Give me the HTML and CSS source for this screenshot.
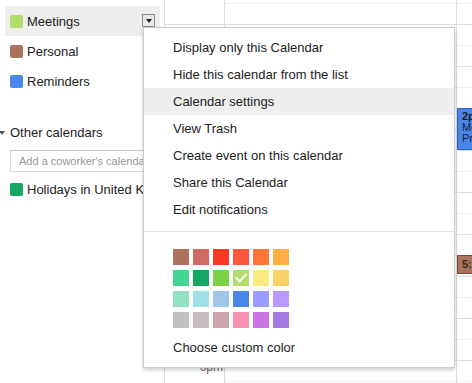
FILE: index.html
```html
<!DOCTYPE html>
<html lang="en">
<head>
<meta charset="utf-8">
<title>Calendar menu</title>
<link rel="stylesheet" href="styles.css">
</head>
<body>
<div class="app">
  <aside class="sidebar">
    <div class="cal-item is-active">
      <span class="swatch c-meetings"></span>
      <span class="cal-label">Meetings</span>
      <span class="drop"><span class="drop-arrow"></span></span>
    </div>
    <div class="cal-item">
      <span class="swatch c-personal"></span>
      <span class="cal-label">Personal</span>
    </div>
    <div class="cal-item">
      <span class="swatch c-reminders"></span>
      <span class="cal-label">Reminders</span>
    </div>
    <div class="section-head"><span class="caret"></span>Other calendars</div>
    <input class="add-input" type="text" placeholder="Add a coworker's calendar">
    <div class="cal-item">
      <span class="swatch c-holidays"></span>
      <span class="cal-label">Holidays in United Kingdom</span>
    </div>
  </aside>

  <div class="times">
    <div class="hour"></div>
    <div class="hour"><span class="time-label">11am</span></div>
    <div class="hour"><span class="time-label">12pm</span></div>
    <div class="hour"><span class="time-label">1pm</span></div>
    <div class="hour"><span class="time-label">2pm</span></div>
    <div class="hour"><span class="time-label">3pm</span></div>
    <div class="hour"><span class="time-label">4pm</span></div>
    <div class="hour"><span class="time-label">5pm</span></div>
    <div class="hour"><span class="time-label">6pm</span></div>
  </div>

  <div class="day">
    <div class="slot"></div><div class="slot"></div><div class="slot"></div><div class="slot"></div>
    <div class="slot"></div><div class="slot"></div><div class="slot"></div><div class="slot"></div>
    <div class="slot"></div><div class="slot"></div><div class="slot"></div><div class="slot"></div>
    <div class="slot"></div><div class="slot"></div><div class="slot"></div><div class="slot"></div>
    <div class="slot"></div><div class="slot"></div><div class="slot"></div>
  </div>

  <div class="day day-next">
    <div class="slot"></div><div class="slot"></div><div class="slot"></div><div class="slot"></div>
    <div class="slot"></div><div class="slot"></div><div class="slot"></div><div class="slot"></div>
    <div class="slot"></div><div class="slot"></div><div class="slot"></div><div class="slot"></div>
    <div class="slot"></div><div class="slot"></div><div class="slot"></div><div class="slot"></div>
    <div class="slot"></div><div class="slot"></div><div class="slot"></div>
    <div class="event event-blue">
      <div class="event-time">2p</div>
      <div class="event-title">Meeting</div>
      <div class="event-title">Project</div>
    </div>
    <div class="event event-brown">
      <div class="event-time">5:30</div>
    </div>
  </div>

  <div class="menu">
    <div class="menu-item">Display only this Calendar</div>
    <div class="menu-item">Hide this calendar from the list</div>
    <div class="menu-item is-hover">Calendar settings</div>
    <div class="menu-item">View Trash</div>
    <div class="menu-item">Create event on this calendar</div>
    <div class="menu-item">Share this Calendar</div>
    <div class="menu-item">Edit notifications</div>
    <div class="menu-sep"></div>
    <div class="palette">
      <span class="chip p1"></span><span class="chip p2"></span><span class="chip p3"></span><span class="chip p4"></span><span class="chip p5"></span><span class="chip p6"></span>
      <span class="chip p7"></span><span class="chip p8"></span><span class="chip p9"></span>
      <span class="chip p10 is-checked"><svg class="check" width="16" height="16" viewBox="0 0 16 16"><path d="M3.5 8.2 L6.6 11.2 L12.5 5" fill="none" stroke="#fff" stroke-width="2.2" stroke-linecap="square"/></svg></span>
      <span class="chip p11"></span><span class="chip p12"></span>
      <span class="chip p13"></span><span class="chip p14"></span><span class="chip p15"></span><span class="chip p16"></span><span class="chip p17"></span><span class="chip p18"></span>
      <span class="chip p19"></span><span class="chip p20"></span><span class="chip p21"></span><span class="chip p22"></span><span class="chip p23"></span><span class="chip p24"></span>
    </div>
    <div class="menu-item custom">Choose custom color</div>
  </div>
</div>
</body>
</html>
```

FILE: styles.css
```css
* { box-sizing: border-box; }

html, body {
  margin: 0;
  padding: 0;
  background: #fff;
}

body {
  font-family: "Liberation Sans", Arial, sans-serif;
  font-size: 13px;
  color: #222;
  overflow: hidden;
}

.app {
  position: relative;
  display: flex;
  width: 472px;
  height: 383px;
  overflow: hidden;
}

/* ---------- sidebar ---------- */
.sidebar {
  width: 164px;
  flex: none;
  padding-top: 6px;
  overflow: hidden;
  white-space: nowrap;
}

.cal-item {
  display: flex;
  align-items: center;
  gap: 4px;
  height: 30px;
  margin-left: 5px;
  width: 155px;
  padding-left: 5px;
  line-height: 15px;
}

.cal-item.is-active { background: #eee; }

.swatch {
  width: 13px;
  height: 13px;
  border-radius: 2px;
  flex: none;
}

.c-meetings { background: #b3dc6c; }
.c-personal { background: #ac725e; }
.c-reminders { background: #4986e7; }
.c-holidays { background: #16a765; }

.cal-label { color: #222; }

.drop {
  margin-left: auto;
  margin-right: 5px;
  align-self: flex-start;
  margin-top: 8px;
  width: 13px;
  height: 13px;
  border: 1px solid #8a8a8a;
  background: #e9e9e9;
  display: flex;
  align-items: center;
  justify-content: center;
}

.drop-arrow {
  width: 0;
  height: 0;
  border-left: 3.5px solid transparent;
  border-right: 3.5px solid transparent;
  border-top: 4px solid #222;
}

.section-head {
  display: flex;
  align-items: center;
  margin-top: 29px;
  height: 16px;
  line-height: 16px;
  color: #222;
}

.caret {
  width: 0;
  height: 0;
  margin-left: -1px;
  margin-right: 5px;
  border-left: 3px solid transparent;
  border-right: 3px solid transparent;
  border-top: 4px solid #555;
}

.add-input {
  display: block;
  margin: 9px 0 2px 10px;
  width: 150px;
  height: 22px;
  border: 1px solid #d9d9d9;
  border-top-color: #c8c8c8;
  padding: 0 0 0 8px;
  font-family: "Liberation Sans", Arial, sans-serif;
  font-size: 11px;
  color: #222;
  outline: none;
}

.add-input::placeholder { color: #999; }

/* ---------- time column ---------- */
.times {
  width: 61px;
  flex: none;
  border-left: 1px solid #ddd;
  border-right: 1px solid #ddd;
  padding-top: 24px;
}

.hour {
  height: 42px;
  border-top: 1px solid #ddd;
  text-align: right;
  padding-right: 1px;
}

.time-label {
  display: block;
  font-size: 12px;
  line-height: 12px;
  color: #666;
}

/* ---------- day columns ---------- */
.day {
  width: 232px;
  flex: none;
  border-right: 1px solid #ddd;
  padding-top: 3px;
}

.day-next {
  position: relative;
  flex: 1;
  width: auto;
  border-right: 0;
}

.slot {
  height: 21px;
  border-top: 1px dotted #ddd;
}

.slot:nth-child(even) { border-top-style: solid; }

.event {
  position: absolute;
  left: 0;
  width: 60px;
  padding: 2px 0 0 4px;
  font-size: 11px;
  line-height: 11px;
  color: #1d1d3a;
  overflow: hidden;
  white-space: nowrap;
}

.event-blue {
  top: 108px;
  height: 42px;
  background: #4986e7;
  border: 1px solid #2d64c8;
}

.event-brown {
  top: 255px;
  height: 19px;
  background: #ac725e;
  border: 1px solid #7a4b3a;
  padding-top: 3px;
}

.event-time {
  font-weight: bold;
  color: #1d1d1d;
}

.event-brown .event-time { color: #3a2a24; }

/* ---------- popup menu ---------- */
.menu {
  position: absolute;
  left: 143px;
  top: 27px;
  width: 312px;
  padding: 6px 0;
  background: #fff;
  border: 1px solid #ccc;
  box-shadow: 0 2px 4px rgba(0, 0, 0, 0.2);
  z-index: 10;
}

.menu-item {
  height: 27px;
  line-height: 27px;
  padding-left: 29px;
  color: #222;
  white-space: nowrap;
}

.menu-item.is-hover { background: #eee; }

.menu-sep {
  margin-top: 8px;
  border-top: 1px solid #e5e5e5;
}

.palette {
  display: grid;
  grid-template-columns: repeat(6, 16px);
  grid-auto-rows: 16px;
  column-gap: 4px;
  row-gap: 5px;
  padding: 17px 0 0 29px;
}

.menu-item.custom { margin-top: 6px; }

.chip {
  display: block;
  width: 16px;
  height: 16px;
}

.check { display: block; }

.p1 { background: #ac725e; }
.p2 { background: #d06b64; }
.p3 { background: #f83a22; }
.p4 { background: #fa573c; }
.p5 { background: #ff7537; }
.p6 { background: #ffad46; }
.p7 { background: #42d692; }
.p8 { background: #16a765; }
.p9 { background: #7bd148; }
.p10 { background: #b3dc6c; }
.p11 { background: #fbe983; }
.p12 { background: #fad165; }
.p13 { background: #92e1c0; }
.p14 { background: #9fe1e7; }
.p15 { background: #9fc6e7; }
.p16 { background: #4986e7; }
.p17 { background: #9a9cff; }
.p18 { background: #b99aff; }
.p19 { background: #c2c2c2; }
.p20 { background: #cabdbf; }
.p21 { background: #cca6ac; }
.p22 { background: #f691b2; }
.p23 { background: #cd74e6; }
.p24 { background: #a47ae2; }
```
